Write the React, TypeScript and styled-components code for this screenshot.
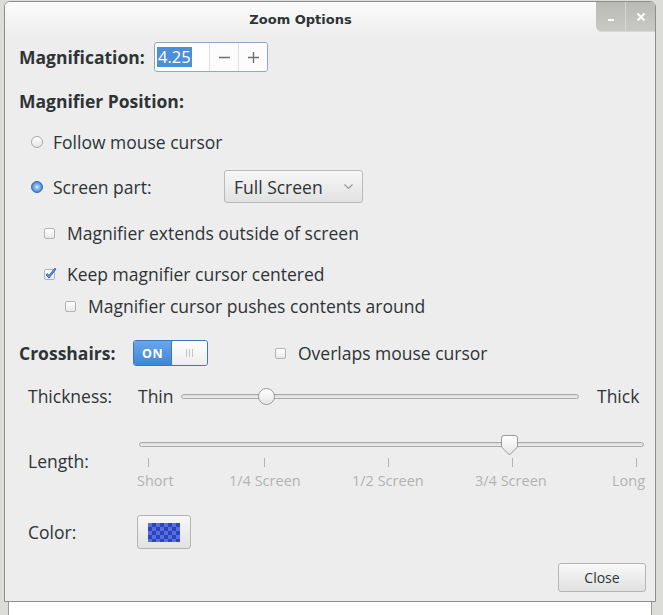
import React from "react";
import styled, { createGlobalStyle, css } from "styled-components";

const Global = createGlobalStyle`
  html, body { margin: 0; padding: 0; }
  body {
    width: 663px; height: 615px; overflow: hidden;
    background: #dcdcd8;
    font-family: "Open Sans", "DejaVu Sans", sans-serif;
    color: #2e3436;
  }
`;

const FONT = `"Open Sans", "DejaVu Sans", sans-serif`;

const Desktop = styled.div`
  width: 663px; height: 615px; box-sizing: border-box;
  padding: 1px 0 0 4px;
  display: flex; flex-direction: column;
`;

const Win = styled.div`
  width: 652px; height: 601px; box-sizing: border-box;
  border: 1px solid #8d8d8d;
  border-radius: 6px 6px 0 0;
  background: #ededed;
  display: flex; flex-direction: column;
  overflow: hidden;
`;

const BackWin = styled.div`
  margin-left: 4px; width: 642px; flex: 1;
  background: #ffffff;
  border-left: 1px solid #9a9a9a; border-right: 1px solid #9a9a9a;
`;

const TitleBar = styled.div`
  height: 37px; flex: none;
  display: flex; align-items: flex-start;
  background: linear-gradient(#fbfbfb, #ececec);
`;

const Title = styled.div`
  flex: 1; height: 36px;
  text-align: center;
  font: bold 13px "DejaVu Sans", sans-serif;
  line-height: 36px;
  color: #2e3436;
`;

const Controls = styled.div`
  display: flex; height: 30px;
  background: linear-gradient(#b9b9b5, #c9c9c6);
  border-radius: 0 0 0 6px;
  box-shadow: inset 0 -1px 0 #d8d8d5;
`;

const CtlBtn = styled.div<{ $sep?: boolean }>`
  width: 29px; height: 30px;
  display: flex; align-items: center; justify-content: center;
  ${(p) => p.$sep && css`border-left: 1px solid #d6d6d3;`}
`;

const Content = styled.div`
  flex: 1; display: flex; flex-direction: column;
  padding-left: 14px;
`;

const Row = styled.div<{ $top: number; $h: number; $indent?: number; $end?: boolean }>`
  display: flex; align-items: center;
  margin-top: ${(p) => p.$top}px;
  height: ${(p) => p.$h}px;
  padding-left: ${(p) => p.$indent ?? 0}px;
  flex: none;
  ${(p) => p.$end && css`justify-content: flex-end; padding-right: 9px;`}
`;

const Label = styled.span<{ $w?: number; $bold?: boolean; $ml?: number }>`
  font-family: ${FONT};
  font-size: 17.5px;
  font-weight: ${(p) => (p.$bold ? 700 : 400)};
  color: #2e3436;
  white-space: nowrap;
  ${(p) => p.$w !== undefined && css`width: ${p.$w}px; flex: none;`}
  ${(p) => p.$ml !== undefined && css`margin-left: ${p.$ml}px;`}
`;

/* spin button */
const Spin = styled.div`
  display: flex; height: 30px; width: 114px; box-sizing: border-box;
  border: 1px solid #8fa7c8; border-radius: 3px;
  background: #fff;
  margin-left: 11px;
  overflow: hidden;
`;
const SpinEntry = styled.div`
  width: 54px; display: flex; align-items: center; padding-left: 2px;
`;
const Selected = styled.span`
  background: #4a90d9; color: #fff;
  font: 16.5px ${FONT};
  line-height: 20px; padding: 0 1px;
`;
const SpinBtn = styled.div`
  width: 29px; display: flex; align-items: center; justify-content: center;
  border-left: 1px solid #e0e0e0;
  background: #fcfcfc;
`;

/* radio */
const RadioBox = styled.span`
  width: 12px; height: 12px; flex: none; margin-right: 10px; display: flex;
`;
const Radio = ({ on }: { on?: boolean }) => (
  <RadioBox>
    <svg width="12" height="12" viewBox="0 0 12 12">
      <defs>
        <linearGradient id="rOff" x1="0" y1="0" x2="0" y2="1">
          <stop offset="0" stopColor="#ffffff" />
          <stop offset="1" stopColor="#e4e4e4" />
        </linearGradient>
        <radialGradient id="rOn" cx="0.5" cy="0.5" r="0.5">
          <stop offset="0" stopColor="#dbe9fa" />
          <stop offset="0.45" stopColor="#8ab6ea" />
          <stop offset="1" stopColor="#3a7ccc" />
        </radialGradient>
      </defs>
      {on ? (
        <circle cx="6" cy="6" r="5.5" fill="url(#rOn)" stroke="#3b6fb2" strokeWidth="1" />
      ) : (
        <circle cx="6" cy="6" r="5.5" fill="url(#rOff)" stroke="#a8a8a8" strokeWidth="1" />
      )}
    </svg>
  </RadioBox>
);

/* checkbox */
const CheckBox = styled.span<{ $gap?: number }>`
  width: 11px; height: 11px; flex: none; position: relative;
  margin-right: ${(p) => p.$gap ?? 12}px;
  box-sizing: border-box;
  border: 1px solid #b3b3b3; border-radius: 2px;
  background: linear-gradient(#ffffff, #e8e8e8);
`;
const CheckMark = styled.svg`
  position: absolute; left: -1px; top: -3px;
`;
const Check = ({ on, gap }: { on?: boolean; gap?: number }) => (
  <CheckBox $gap={gap}>
    {on && (
      <CheckMark width="14" height="14" viewBox="0 0 14 14">
        <path d="M2 8 L5 11 L12 2 L10.5 1.5 L5 8.5 L3.3 6.6 Z" fill="#6f9fdc" stroke="#2f62a8" strokeWidth="1" strokeLinejoin="round" />
      </CheckMark>
    )}
  </CheckBox>
);

/* combo */
const Combo = styled.div`
  width: 139px; height: 33px; box-sizing: border-box;
  display: flex; align-items: center; justify-content: space-between;
  padding: 0 9px 0 9px;
  border: 1px solid #b9b9b9; border-radius: 3px;
  background: linear-gradient(#f6f6f6, #e2e2e2);
  font: 17.5px ${FONT}; color: #2e3436;
`;

/* switch */
const Switch = styled.div`
  width: 75px; height: 26px; box-sizing: border-box;
  display: flex; border: 1px solid #3a76c1; border-radius: 3px;
  overflow: hidden; flex: none;
`;
const SwitchOn = styled.div`
  width: 37px; display: flex; align-items: center; justify-content: center;
  background: linear-gradient(#6aa7ea, #3f85d8);
  color: #fff; font: bold 12.5px ${FONT}; letter-spacing: 0.5px;
`;
const SwitchKnob = styled.div`
  flex: 1; display: flex; align-items: center; justify-content: center; gap: 2px;
  background: linear-gradient(#ffffff, #ededed);
  border: 1px solid #3a76c1; border-radius: 2px; margin: -1px -1px -1px 0;
`;
const Ridge = styled.span`
  width: 1px; height: 8px; background: #c4c4c4;
`;

/* sliders */
const Trough = styled.div<{ $w: number }>`
  width: ${(p) => p.$w}px; height: 5px; box-sizing: border-box; flex: none;
  border: 1px solid #a9a9a9; border-radius: 3px;
  background: linear-gradient(#d9d9d9, #eeeeee);
  position: relative;
`;
const RoundKnob = styled.div`
  position: absolute; top: -7px; width: 17px; height: 17px; box-sizing: border-box;
  border: 1px solid #9a9a9a; border-radius: 50%;
  background: linear-gradient(#ffffff, #e6e6e6);
`;
const ScaleBox = styled.div`
  position: relative; width: 509px; height: 62px; flex: none;
`;
const ScaleTrough = styled(Trough)`
  position: absolute; left: 2px; top: 12px;
`;
const PointerKnob = styled.svg`
  position: absolute; left: 364px; top: 5px;
`;
const Tick = styled.span`
  position: absolute; top: 28px; width: 1px; height: 9px; background: #b2b2b2;
`;
const TickLabel = styled.span`
  position: absolute; top: 43px;
  font: 14.5px ${FONT};
  line-height: 16px;
  color: #b3b3b3; white-space: nowrap;
`;

/* buttons */
const Button = styled.div<{ $w: number; $h: number }>`
  width: ${(p) => p.$w}px; height: ${(p) => p.$h}px; box-sizing: border-box;
  display: flex; align-items: center; justify-content: center;
  border: 1px solid #b5b5b5; border-radius: 3px;
  background: linear-gradient(#f8f8f8, #e1e1e1);
  font: 14px ${FONT}; color: #2e3436;
`;
const Swatch = styled.div`
  width: 32px; height: 19px;
  background-color: #2f43bf;
  background-image: repeating-conic-gradient(#2f43bf 0 25%, #5670e0 0 50%);
  background-size: 8px 8px;
`;

const ticks = [
  { x: 11, label: "Short", lx: 0 },
  { x: 127, label: "1/4 Screen", lx: 92 },
  { x: 251, label: "1/2 Screen", lx: 215 },
  { x: 375, label: "3/4 Screen", lx: 338 },
  { x: 499, label: "Long", lx: 475 },
];

export default function App() {
  return (
    <>
      <Global />
      <Desktop>
        <Win>
          <TitleBar>
            <Title>Zoom Options</Title>
            <Controls>
              <CtlBtn>
                <svg width="10" height="10" viewBox="0 0 10 10">
                  <rect x="2" y="7" width="6" height="2" fill="#fff" />
                </svg>
              </CtlBtn>
              <CtlBtn $sep>
                <svg width="10" height="10" viewBox="0 0 10 10">
                  <path d="M1.5 1.5 L8.5 8.5 M8.5 1.5 L1.5 8.5" stroke="#fff" strokeWidth="2" />
                </svg>
              </CtlBtn>
            </Controls>
          </TitleBar>
          <Content>
            <Row $top={3} $h={30}>
              <Label $bold $w={124}>Magnification:</Label>
              <Spin>
                <SpinEntry>
                  <Selected>4.25</Selected>
                </SpinEntry>
                <SpinBtn>
                  <svg width="11" height="11" viewBox="0 0 11 11">
                    <path d="M0 5.5 H11" stroke="#6e6e6e" strokeWidth="1.4" />
                  </svg>
                </SpinBtn>
                <SpinBtn>
                  <svg width="11" height="11" viewBox="0 0 11 11">
                    <path d="M0 5.5 H11 M5.5 0 V11" stroke="#6e6e6e" strokeWidth="1.4" />
                  </svg>
                </SpinBtn>
              </Spin>
            </Row>
            <Row $top={18} $h={22}>
              <Label $bold>Magnifier Position:</Label>
            </Row>
            <Row $top={19} $h={22} $indent={12}>
              <Radio />
              <Label>Follow mouse cursor</Label>
            </Row>
            <Row $top={17} $h={33} $indent={12}>
              <Radio on />
              <Label $w={171}>Screen part:</Label>
              <Combo>
                Full Screen
                <svg width="9" height="6" viewBox="0 0 9 6">
                  <path d="M0.5 0.5 L4.5 4.5 L8.5 0.5" fill="none" stroke="#9a9a9a" strokeWidth="1.2" />
                </svg>
              </Combo>
            </Row>
            <Row $top={19} $h={22} $indent={25}>
              <Check />
              <Label>Magnifier extends outside of screen</Label>
            </Row>
            <Row $top={19} $h={22} $indent={25}>
              <Check on />
              <Label>Keep magnifier cursor centered</Label>
            </Row>
            <Row $top={10} $h={22} $indent={46}>
              <Check />
              <Label>Magnifier cursor pushes contents around</Label>
            </Row>
            <Row $top={23} $h={26}>
              <Label $bold $w={114}>Crosshairs:</Label>
              <Switch>
                <SwitchOn>ON</SwitchOn>
                <SwitchKnob>
                  <Ridge />
                  <Ridge />
                  <Ridge />
                </SwitchKnob>
              </Switch>
              <Label $w={67} />
              <Check />
              <Label>Overlaps mouse cursor</Label>
            </Row>
            <Row $top={19} $h={22} $indent={9}>
              <Label $w={110}>Thickness:</Label>
              <Label $w={43}>Thin</Label>
              <Trough $w={398}>
                <RoundKnob style={{ left: 76 }} />
              </Trough>
              <Label $ml={18}>Thick</Label>
            </Row>
            <Row $top={23} $h={62} $indent={9}>
              <Label $w={109}>Length:</Label>
              <ScaleBox>
                <ScaleTrough $w={505} />
                <PointerKnob width="17" height="21" viewBox="0 0 17 21">
                  <defs>
                    <linearGradient id="pk" x1="0" y1="0" x2="0" y2="1">
                      <stop offset="0" stopColor="#ffffff" />
                      <stop offset="1" stopColor="#e4e4e4" />
                    </linearGradient>
                  </defs>
                  <path d="M3 0.5 H14 Q16.5 0.5 16.5 3 V12 L8.5 20 L0.5 12 V3 Q0.5 0.5 3 0.5 Z" fill="url(#pk)" stroke="#9a9a9a" />
                </PointerKnob>
                {ticks.map((t) => (
                  <React.Fragment key={t.label}>
                    <Tick style={{ left: t.x }} />
                    <TickLabel style={{ left: t.lx }}>{t.label}</TickLabel>
                  </React.Fragment>
                ))}
              </ScaleBox>
            </Row>
            <Row $top={23} $h={34} $indent={9}>
              <Label $w={109}>Color:</Label>
              <Button $w={54} $h={34}>
                <Swatch />
              </Button>
            </Row>
            <Row $top={14} $h={29} $end>
              <Button $w={88} $h={29}>Close</Button>
            </Row>
          </Content>
        </Win>
        <BackWin />
      </Desktop>
    </>
  );
}
